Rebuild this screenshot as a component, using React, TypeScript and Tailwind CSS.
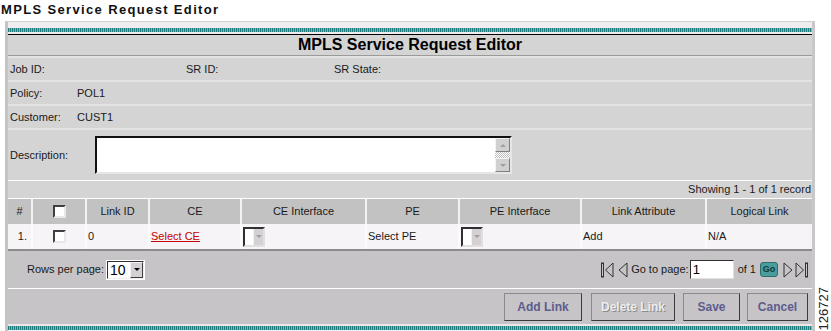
import React from 'react';

const stripe =
  'h-[4px] bg-[repeating-linear-gradient(90deg,#1d7a7a_0px,#1d7a7a_1px,#7fb8b8_1px,#7fb8b8_2px)]';

const cols = [
  { label: '#', w: 'w-[25px]' },
  { label: 'check', w: 'w-[54px]' },
  { label: 'Link ID', w: 'w-[63px]' },
  { label: 'CE', w: 'w-[92px]' },
  { label: 'CE Interface', w: 'w-[125px]' },
  { label: 'PE', w: 'w-[93px]' },
  { label: 'PE Interface', w: 'w-[122px]' },
  { label: 'Link Attribute', w: 'w-[125px]' },
  { label: 'Logical Link', w: 'flex-1' },
];

const Checkbox = () => (
  <div className="w-[13px] h-[13px] bg-white border-2 border-t-[#404040] border-l-[#404040] border-b-[#e8e8e8] border-r-[#e8e8e8]" />
);

const SmallSelect = () => (
  <div className="flex w-[22px] h-[20px] bg-white border-2 border-t-[#303030] border-l-[#303030] border-b-[#e0e0e0] border-r-[#e0e0e0]">
    <div className="flex-1" />
    <div className="w-[10px] bg-[#d4d0d4] flex items-center justify-center border-l border-[#f0f0f0]">
      <div className="w-0 h-0 border-l-[3px] border-r-[3px] border-t-[3px] border-l-transparent border-r-transparent border-t-[#a0a0a0]" />
    </div>
  </div>
);

const Tri = ({ dir, bar }: { dir: 'l' | 'r'; bar?: boolean }) => (
  <svg width={bar ? 13 : 10} height="16" viewBox={bar ? '0 0 13 16' : '0 0 10 16'}>
    {dir === 'l' ? (
      bar ? (
        <>
          <rect x="0.5" y="1" width="2" height="14" fill="#c6c4c6" stroke="#333" strokeWidth="1" />
          <path d="M12 1 L4.5 8 L12 15 Z" fill="#c6c4c6" stroke="#333" strokeWidth="1" />
        </>
      ) : (
        <path d="M9 1 L1 8 L9 15 Z" fill="#c6c4c6" stroke="#333" strokeWidth="1" />
      )
    ) : bar ? (
      <>
        <path d="M1 1 L8.5 8 L1 15 Z" fill="#c6c4c6" stroke="#333" strokeWidth="1" />
        <rect x="10.5" y="1" width="2" height="14" fill="#c6c4c6" stroke="#333" strokeWidth="1" />
      </>
    ) : (
      <path d="M1 1 L9 8 L1 15 Z" fill="#c6c4c6" stroke="#333" strokeWidth="1" />
    )}
  </svg>
);

const ActionButton = ({ label, w, disabled }: { label: string; w: string; disabled?: boolean }) => (
  <div
    className={`${w} h-[28px] flex items-center justify-center border border-t-[#8a8a8a] border-l-[#8a8a8a] border-b-[#3a3a3a] border-r-[#3a3a3a] bg-[#c6c4c6] text-[12px] font-bold ${
      disabled ? 'text-[#ececec] [text-shadow:1px_1px_0_#8a8a8a]' : 'text-[#5c5c8e]'
    }`}
  >
    {label}
  </div>
);

export default function App() {
  return (
    <div className="relative w-[831px] h-[331px] overflow-hidden bg-white font-['Liberation_Sans',Arial,sans-serif] text-[11px] text-[#1a1a1a]">
      {/* page title */}
      <div className="h-[19px] pl-[1px] pt-[1px] text-[13px] leading-[17px] font-bold tracking-[1.35px] text-[#111]">
        MPLS Service Request Editor
      </div>

      <div className="ml-[5px] mt-[2px] w-[810px] h-[310px] border-t border-l-[3px] border-r-[3px] border-[#d0d0d0] border-l-[#c4c4c4] border-r-[#c8c8c8] bg-[#efedef] pt-[6px]">
        <div className={stripe} />
        <div className="h-[2px]" />
        <div className="h-[1px] bg-black" />

        <div className="bg-[#e2e2e2] flex flex-col">
          <div className="h-[20px] bg-[#d4d4d4] border-b border-[#9a9a9a] box-content flex items-center justify-center text-[16px] font-bold text-black">
            MPLS Service Request Editor
          </div>

          <div className="flex flex-col gap-[2px] pt-[2px]">
            <div className="h-[22px] bg-[#d4d4d4] flex items-center pl-[2px]">
              <span className="w-[176px]">Job ID:</span>
              <span className="w-[148px]">SR ID:</span>
              <span>SR State:</span>
            </div>
            <div className="h-[22px] bg-[#d4d4d4] flex items-center pl-[2px]">
              <span className="w-[67px]">Policy:</span>
              <span>POL1</span>
            </div>
            <div className="h-[22px] bg-[#d4d4d4] flex items-center pl-[2px]">
              <span className="w-[67px]">Customer:</span>
              <span>CUST1</span>
            </div>
            <div className="h-[50px] bg-[#d4d4d4] flex items-center pl-[2px]">
              <span className="w-[85px]">Description:</span>
              <div className="w-[417px] h-[38px] bg-white flex border-2 border-t-[#101010] border-l-[#101010] border-b-[#e6e6e6] border-r-[#e6e6e6]">
                <div className="flex-1" />
                <div className="w-[15px] flex flex-col">
                  <div className="h-[14px] bg-[#d0d0d0] border border-t-[#f4f4f4] border-l-[#f4f4f4] border-b-[#808080] border-r-[#808080] flex items-center justify-center">
                    <div className="w-0 h-0 border-l-[3px] border-r-[3px] border-b-[3px] border-l-transparent border-r-transparent border-b-[#a0a0a0]" />
                  </div>
                  <div className="flex-1 bg-[repeating-conic-gradient(#bdbdbd_0_25%,#ffffff_0_50%)] bg-[length:2px_2px]" />
                  <div className="h-[14px] bg-[#d0d0d0] border border-t-[#f4f4f4] border-l-[#f4f4f4] border-b-[#808080] border-r-[#808080] flex items-center justify-center">
                    <div className="w-0 h-0 border-l-[3px] border-r-[3px] border-t-[3px] border-l-transparent border-r-transparent border-t-[#a0a0a0]" />
                  </div>
                </div>
              </div>
            </div>
          </div>

          <div className="h-[1px] bg-white" />
          <div className="h-[17px] bg-[#d4d4d4] flex items-center justify-end text-[11px] pr-[1px]">
            Showing 1 - 1 of 1 record
          </div>
          <div className="h-[1px] bg-white" />

          {/* table header */}
          <div className="flex h-[25px] bg-[#c2c2c2] text-center">
            {cols.map((c, i) => (
              <div
                key={i}
                className={`${c.w} flex items-center justify-center ${
                  i < cols.length - 1 ? 'border-r-2 border-[#f2f2f2]' : ''
                }`}
              >
                {c.label === 'check' ? <Checkbox /> : c.label}
              </div>
            ))}
          </div>

          {/* data row */}
          <div className="flex h-[25px] bg-[#f7f4f7]">
            <div className="w-[25px] flex items-center justify-end pr-[4px] border-r-2 border-[#fbfbfb]">1.</div>
            <div className="w-[54px] flex items-center justify-center border-r-2 border-[#fbfbfb]">
              <Checkbox />
            </div>
            <div className="w-[63px] flex items-center pl-[1px] border-r-2 border-[#fbfbfb]">0</div>
            <div className="w-[92px] flex items-center pl-[1px] border-r-2 border-[#fbfbfb]">
              <span className="text-[#c40000] underline">Select CE</span>
            </div>
            <div className="w-[125px] flex items-center pl-[1px] border-r-2 border-[#fbfbfb]">
              <SmallSelect />
            </div>
            <div className="w-[93px] flex items-center pl-[1px] border-r-2 border-[#fbfbfb]">Select PE</div>
            <div className="w-[122px] flex items-center pl-[1px] border-r-2 border-[#fbfbfb]">
              <SmallSelect />
            </div>
            <div className="w-[125px] flex items-center pl-[1px] border-r-2 border-[#fbfbfb]">Add</div>
            <div className="flex-1 flex items-center pl-[1px]">N/A</div>
          </div>
          <div className="h-[2px] bg-[#8c8c8c]" />

          {/* pagination */}
          <div className="h-[37px] bg-[#c6c4c6] flex items-center justify-between pl-[19px] pr-[4px]">
            <div className="flex items-center gap-[3px]">
              <span>Rows per page:</span>
              <div className="flex w-[37px] h-[18px] bg-white border border-t-[#303030] border-l-[#303030] border-b-[#f0f0f0] border-r-[#f0f0f0] outline outline-1 outline-white">
                <div className="flex-1 text-[14px] leading-[16px] pl-[2px] text-black">10</div>
                <div className="w-[13px] bg-[#d4d0d4] border border-t-[#f4f4f4] border-l-[#f4f4f4] border-b-[#404040] border-r-[#404040] flex items-center justify-center">
                  <div className="w-0 h-0 border-l-[3px] border-r-[3px] border-t-[3px] border-l-transparent border-r-transparent border-t-black" />
                </div>
              </div>
            </div>
            <div className="flex items-center">
              <Tri dir="l" bar />
              <span className="ml-[4px] flex"><Tri dir="l" /></span>
              <span className="ml-[3px]">Go to page:</span>
              <div className="ml-[1px] w-[44px] h-[19px] bg-white border border-t-[#303030] border-l-[#303030] border-b-[#e0e0e0] border-r-[#e0e0e0] text-[13px] leading-[17px] pl-[2px] text-black">
                1
              </div>
              <span className="ml-[4px]">of 1</span>
              <div className="ml-[4px] w-[18px] h-[15px] rounded-[3px] bg-[#4b9c9c] border border-[#2d6e6e] flex items-center justify-center text-[9px] font-bold text-[#0d3a3a]">
                Go
              </div>
              <span className="ml-[5px] flex"><Tri dir="r" /></span>
              <span className="ml-[2px] flex"><Tri dir="r" bar /></span>
            </div>
          </div>
          <div className="h-[1px] bg-white" />
          <div className="h-[35px] bg-[#c6c4c6] flex items-center justify-end pr-[4px]">
            <ActionButton label="Add Link" w="w-[78px]" />
            <div className="w-[9px]" />
            <ActionButton label="Delete Link" w="w-[84px]" disabled />
            <div className="w-[8px]" />
            <ActionButton label="Save" w="w-[57px]" />
            <div className="w-[7px]" />
            <ActionButton label="Cancel" w="w-[61px]" />
          </div>
        </div>
        <div className="h-[2px] bg-[#efe6ea]" />
        <div className={stripe} />
      </div>

      {/* figure number */}
      <div className="absolute right-[1px] bottom-[1px] [writing-mode:vertical-rl] rotate-180 text-[13px] leading-[13px] text-[#222]">
        126727
      </div>
    </div>
  );
}
